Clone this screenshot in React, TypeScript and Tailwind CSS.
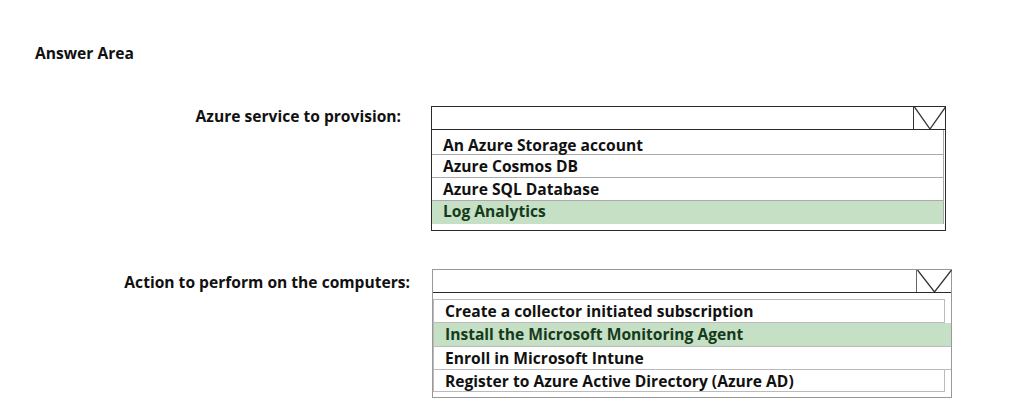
import React from "react";

function Arrow({ w, h, border }: { w: number; h: number; border: string }) {
  return (
    <div className={`h-full border-l ${border} relative`} style={{ width: w }}>
      <svg className="absolute left-0 top-0" width={w} height={h} viewBox={`0 0 ${w} ${h}`} fill="none">
        <path d={`M0.5 0 L${w / 2} ${h} L${w - 0.5} 0`} stroke="#333" strokeWidth="1.3" />
      </svg>
    </div>
  );
}

export default function App() {
  const font = { fontFamily: "'Open Sans', sans-serif" };
  return (
    <div className="w-[1025px] h-[406px] bg-white text-[#111] overflow-hidden" style={font}>
      <div className="pt-[44px] pl-[35px] text-[15.6px] font-bold leading-[18px]">Answer Area</div>

      {/* Section 1 */}
      <div className="flex mt-[44px]">
        <div className="w-[401px] text-right text-[15.6px] font-bold leading-[20px]">Azure service to provision:</div>
        <div className="ml-[30px] w-[515px] h-[125px] border border-[#2a2a2a] flex flex-col">
          <div className="h-[23px] border-b border-[#2a2a2a] flex justify-end shrink-0">
            <Arrow w={32} h={22} border="border-[#333]" />
          </div>
          <div className="flex flex-col text-[15.6px] font-bold leading-[20px] border-r border-[#aaa] mr-[1px]">
            <div className="h-[25px] pt-[5px] pl-[11px] border-b border-[#aaa]">An Azure Storage account</div>
            <div className="h-[23px] pt-[1px] pl-[11px] border-b border-[#aaa]">Azure Cosmos DB</div>
            <div className="h-[23px] pt-[1px] pl-[11px] border-b border-[#aaa]">Azure SQL Database</div>
            <div className="h-[23px] pl-[11px] bg-[#c5e0c4] text-[#163a1c]">Log Analytics</div>
          </div>
        </div>
      </div>

      {/* Section 2 */}
      <div className="flex mt-[38px]">
        <div className="w-[410px] text-right text-[15.6px] font-bold leading-[22px] pt-[2px]">Action to perform on the computers:</div>
        <div className="ml-[22px] w-[520px] h-[129px] border border-[#999] flex flex-col">
          <div className="h-[23px] border-b border-[#2a2a2a] flex justify-end shrink-0">
            <Arrow w={35} h={22} border="border-[#666]" />
          </div>
          <div className="mt-[6px] flex flex-col text-[15.6px] font-bold leading-[22px]">
            <div className="h-[24px] mr-[6px] pl-[11px] border border-[#bbb]">Create a collector initiated subscription</div>
            <div className="h-[24px] pl-[11px] bg-[#c5e0c4] text-[#163a1c] border-l border-b border-[#bbb]">Install the Microsoft Monitoring Agent</div>
            <div className="h-[23px] pl-[11px] border-l border-b border-[#bbb]">Enroll in Microsoft Intune</div>
            <div className="h-[22px] mr-[6px] pl-[11px] border-l border-r border-b border-[#bbb]">Register to Azure Active Directory (Azure AD)</div>
          </div>
        </div>
      </div>
    </div>
  );
}
